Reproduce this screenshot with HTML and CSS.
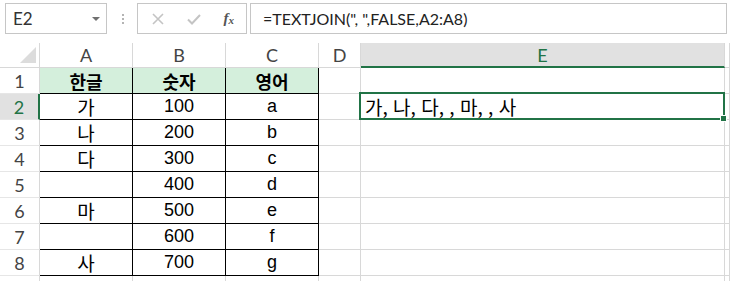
FILE: index.html
```html
<!DOCTYPE html>
<html lang="ko">

<head>
    <meta charset="UTF-8">
    <title>TEXTJOIN</title>
    <link rel="stylesheet" href="styles.css">
</head>

<body>
    <div class="formula-bar">
        <div class="name-box">
            <span>E2</span>
            <span class="caret"></span>
        </div>
        <div class="grip"><i></i><i></i><i></i></div>
        <div class="fx-buttons">
            <svg width="14" height="14" viewBox="0 0 14 14">
                <path d="M2 2 L12 12 M12 2 L2 12" stroke="#c4c4c4" stroke-width="1.6" fill="none" />
            </svg>
            <svg width="16" height="14" viewBox="0 0 16 14">
                <path d="M2 7.5 L6 11.5 L14 3" stroke="#c4c4c4" stroke-width="2" fill="none" />
            </svg>
            <span class="fx">f<sub>x</sub></span>
        </div>
        <div class="formula">=TEXTJOIN(", ",FALSE,A2:A8)</div>
    </div>

    <div class="sheet">
        <!-- column headers -->
        <div class="corner"><div class="tri"></div></div>
        <div class="col-head">A</div>
        <div class="col-head">B</div>
        <div class="col-head">C</div>
        <div class="col-head">D</div>
        <div class="col-head active">E</div>
        <div class="col-head"></div>

        <!-- row 1 -->
        <div class="row-head">1</div>
        <div class="cell t head">한글</div>
        <div class="cell t head">숫자</div>
        <div class="cell t head">영어</div>
        <div class="cell"></div>
        <div class="cell"></div>
        <div class="cell"></div>

        <!-- row 2 -->
        <div class="row-head active">2</div>
        <div class="cell t ko">가</div>
        <div class="cell t">100</div>
        <div class="cell t">a</div>
        <div class="cell"></div>
        <div class="cell sel ko">가, 나, 다, , 마, , 사</div>
        <div class="cell"></div>

        <!-- row 3 -->
        <div class="row-head">3</div>
        <div class="cell t ko">나</div>
        <div class="cell t">200</div>
        <div class="cell t">b</div>
        <div class="cell"></div>
        <div class="cell"></div>
        <div class="cell"></div>

        <!-- row 4 -->
        <div class="row-head">4</div>
        <div class="cell t ko">다</div>
        <div class="cell t">300</div>
        <div class="cell t">c</div>
        <div class="cell"></div>
        <div class="cell"></div>
        <div class="cell"></div>

        <!-- row 5 -->
        <div class="row-head">5</div>
        <div class="cell t ko"></div>
        <div class="cell t">400</div>
        <div class="cell t">d</div>
        <div class="cell"></div>
        <div class="cell"></div>
        <div class="cell"></div>

        <!-- row 6 -->
        <div class="row-head">6</div>
        <div class="cell t ko">마</div>
        <div class="cell t">500</div>
        <div class="cell t">e</div>
        <div class="cell"></div>
        <div class="cell"></div>
        <div class="cell"></div>

        <!-- row 7 -->
        <div class="row-head">7</div>
        <div class="cell t ko"></div>
        <div class="cell t">600</div>
        <div class="cell t">f</div>
        <div class="cell"></div>
        <div class="cell"></div>
        <div class="cell"></div>

        <!-- row 8 -->
        <div class="row-head">8</div>
        <div class="cell t ko">사</div>
        <div class="cell t">700</div>
        <div class="cell t">g</div>
        <div class="cell"></div>
        <div class="cell"></div>
        <div class="cell"></div>

        <!-- row 9 (cut off) -->
        <div class="row-head"></div>
        <div class="cell"></div>
        <div class="cell"></div>
        <div class="cell"></div>
        <div class="cell"></div>
        <div class="cell"></div>
        <div class="cell"></div>
    </div>
</body>

</html>
```

FILE: styles.css
```css
body {
    margin: 0;
    background: #fff;
    font-family: Lato, "Noto Sans", sans-serif;
    color: #222;
    overflow: hidden;
}

/* formula bar */
.formula-bar {
    display: flex;
    align-items: flex-start;
    height: 43px;
    padding: 3px 3px 0 5px;
    box-sizing: border-box;
}

.name-box {
    width: 102px;
    height: 31px;
    border: 1px solid #c6c6c6;
    box-sizing: border-box;
    display: flex;
    align-items: center;
    padding-left: 7px;
    font-size: 17px;
    color: #333;
}

.caret {
    margin-left: auto;
    margin-right: 6px;
    border-left: 4px solid transparent;
    border-right: 4px solid transparent;
    border-top: 4px solid #707070;
}

.grip {
    display: flex;
    flex-direction: column;
    gap: 2px;
    margin: 11px 0 0 15px;
}

.grip i {
    width: 2px;
    height: 2px;
    background: #b4b4b4;
}

.fx-buttons {
    width: 110px;
    height: 31px;
    margin-left: 13px;
    border: 1px solid #c6c6c6;
    box-sizing: border-box;
    display: flex;
    align-items: center;
    justify-content: space-between;
    padding: 0 12px 0 13px;
}

.fx {
    font-family: "Liberation Serif", serif;
    font-style: italic;
    font-weight: bold;
    font-size: 15px;
    color: #555;
}

.fx sub {
    font-size: 11px;
    vertical-align: -1px;
}

.formula {
    flex: 1;
    height: 31px;
    margin-left: 3px;
    border: 1px solid #c6c6c6;
    box-sizing: border-box;
    display: flex;
    align-items: center;
    padding-left: 12px;
    font-size: 16px;
    color: #222;
}

/* grid */
.sheet {
    display: grid;
    grid-template-columns: 40px 93px 93px 93px 42px 364px 1fr;
    grid-template-rows: 25px repeat(9, 26px);
    height: 238px;
    overflow: hidden;
}

.sheet > div {
    box-sizing: border-box;
    display: flex;
    align-items: center;
    justify-content: center;
    border-right: 1px solid #d8d8d8;
    border-bottom: 1px solid #d8d8d8;
}

.corner {
    justify-content: flex-end !important;
    align-items: flex-end !important;
    padding: 0 3px 4px 0;
}

.tri {
    width: 16px;
    height: 16px;
    background: #dcdcdc;
    clip-path: polygon(100% 0, 100% 100%, 0 100%);
}

.col-head,
.row-head {
    font-size: 18px;
    color: #444;
}

.row-head {
    border-bottom-color: #e6e6e6 !important;
}

.col-head.active {
    background: #e1e1e1;
    color: #217346;
    border-bottom: 2px solid #217346;
}

.row-head.active {
    background: #e1e1e1;
    color: #217346;
    border-right: 2px solid #217346;
}

.cell {
    font-family: "Liberation Sans", Arial, sans-serif;
    font-size: 18px;
    color: #000;
}

.cell.t {
    border-right-color: #000;
    border-bottom-color: #000;
}

.ko {
    font-family: "Noto Sans CJK KR", sans-serif;
    font-size: 19px;
}

.head {
    background: #d4efdc;
    font-family: "Noto Sans CJK KR", sans-serif;
    font-weight: bold;
}

.sel {
    position: relative;
    justify-content: flex-start !important;
    padding-left: 4px;
}

.sel::after {
    content: "";
    position: absolute;
    left: -2px;
    top: -2px;
    right: -1px;
    bottom: -1px;
    border: 2px solid #217346;
}

.sel::before {
    content: "";
    position: absolute;
    right: -3px;
    bottom: -3px;
    width: 5px;
    height: 5px;
    background: #217346;
    border: 1px solid #fff;
    z-index: 1;
}
```
